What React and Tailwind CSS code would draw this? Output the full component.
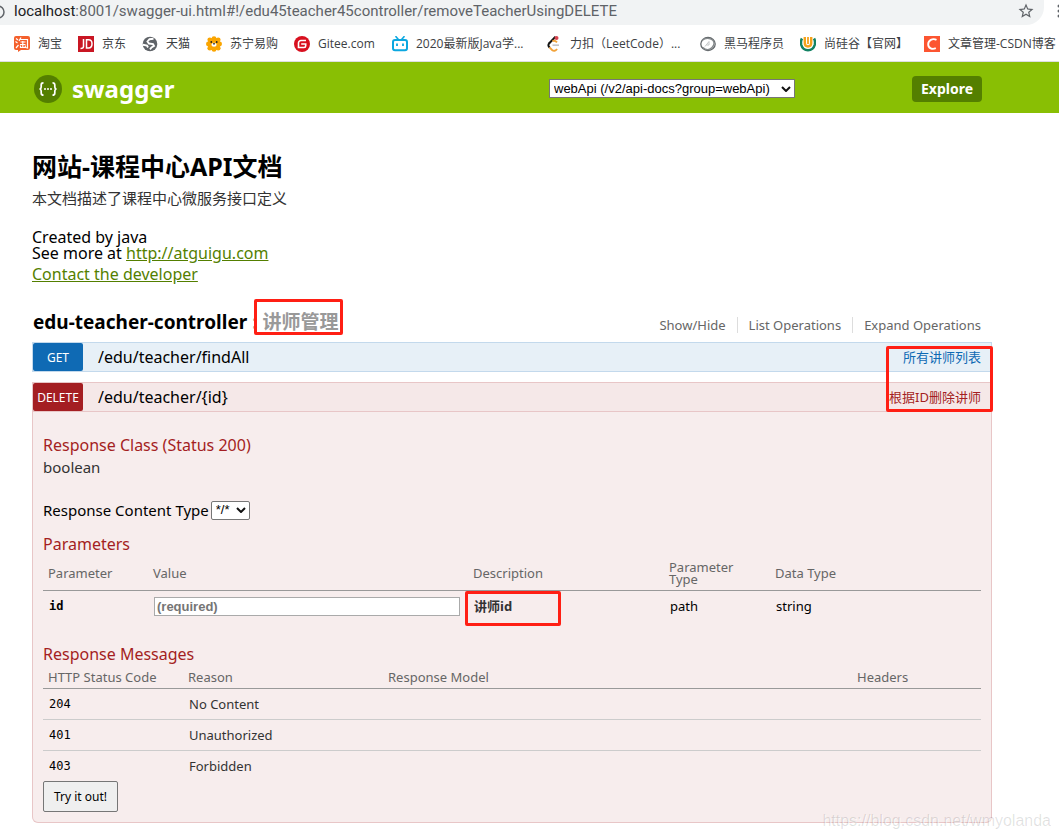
import React from "react";

const bodyFont = "font-['Noto_Sans','Noto_Sans_CJK_SC',sans-serif]";
const uiFont = "font-['Open_Sans','Noto_Sans_CJK_SC',sans-serif]";

function TaobaoIcon() {
  return (
    <svg width="16" height="16" viewBox="0 0 16 16" aria-hidden="true">
      <path d="M2 0h12a2 2 0 0 1 2 2v10a2 2 0 0 1-2 2H7l-3 2v-2H2a2 2 0 0 1-2-2V2a2 2 0 0 1 2-2z" fill="#f4602c" />
      <path d="M2 2.500l2 1.500M1.500 5.500l2 1.500M2 12l2.500-3M7 1.500L5 5M6.500 3.500h7v8.500l-2-.5M6.500 6h5M6 8.500h5.500M8.800 5v6M6.500 9.500v2h4.800v-2" fill="none" stroke="#fff" strokeWidth="1.200" />
    </svg>
  );
}

function JdIcon() {
  return (
    <svg width="16" height="16" viewBox="0 0 16 16" aria-hidden="true">
      <path d="M0 0h16v16H0z" fill="#c91623" />
      <path d="M5.500 3v7.500c0 1.500-1 2-3 2M8.500 3.800h2c2.300 0 3.500 1.700 3.500 4s-1.200 4.200-3.500 4.200h-2z" fill="none" stroke="#fff" strokeWidth="1.500" />
    </svg>
  );
}

function GlobeIcon() {
  return (
    <svg width="16" height="16" viewBox="0 0 16 16" aria-hidden="true">
      <circle cx="8" cy="8" r="7.300" fill="#5f6368" />
      <path d="M11.500 2.800L7.500 3.200 5.500 5.500l1.500 2 4 .6 1 1.900-2.500 1.500-1.500 1.800M.8 8.800l4.200.7 1 2" fill="none" stroke="#fff" strokeWidth="1.900" />
    </svg>
  );
}

function LionIcon() {
  return (
    <svg width="16" height="16" viewBox="0 0 16 16" aria-hidden="true">
      <g fill="#faa500">
        <circle cx="8" cy="8" r="6.300" />
        <circle cx="8" cy="2.600" r="2.400" /><circle cx="8" cy="13.400" r="2.400" />
        <circle cx="2.400" cy="8" r="2.400" /><circle cx="13.600" cy="8" r="2.400" />
        <circle cx="3.800" cy="3.800" r="2.400" /><circle cx="12.200" cy="3.800" r="2.400" />
        <circle cx="3.800" cy="12.200" r="2.400" /><circle cx="12.200" cy="12.200" r="2.400" />
      </g>
      <circle cx="5.300" cy="6" r=".9" fill="#222" /><circle cx="10.700" cy="6" r=".9" fill="#222" />
      <ellipse cx="8" cy="8.800" rx="2.600" ry="2" fill="#fff" />
      <path d="M6.600 7.300h2.800L8 9z" fill="#222" />
    </svg>
  );
}

function GiteeIcon() {
  return (
    <svg width="16" height="16" viewBox="0 0 16 16" aria-hidden="true">
      <circle cx="8" cy="8" r="8" fill="#d8101f" />
      <path d="M12 4.500H7A2.500 2.500 0 0 0 4.500 7v4.500H10A1.800 1.800 0 0 0 11.700 9.700V8H7.200" fill="none" stroke="#fff" strokeWidth="1.600" />
    </svg>
  );
}

function BiliIcon() {
  return (
    <svg width="16" height="16" viewBox="0 0 16 16" aria-hidden="true">
      <path d="M4 .7l2.200 2.500M12 .7L9.800 3.200" stroke="#0ba7e0" strokeWidth="1.600" strokeLinecap="round" />
      <rect x="1" y="4" width="14" height="10.300" rx="2" fill="none" stroke="#0ba7e0" strokeWidth="2" />
      <path d="M5 7.500v2.500M11 7.500v2.500" stroke="#0ba7e0" strokeWidth="1.800" />
    </svg>
  );
}

function LeetIcon() {
  return (
    <svg width="16" height="16" viewBox="0 0 16 16" aria-hidden="true">
      <path d="M9.500 .8L3 7.500" fill="none" stroke="#111" strokeWidth="2" />
      <path d="M3.600 7c-1.800 1.500-1.500 3 0 4.500" fill="none" stroke="#111" strokeWidth="2" />
      <path d="M3.500 11.300l2.600 2.700c1.600 1.400 3.300 1 5-1M6.500 5c2-.8 3.300 0 4.500 1.300" fill="none" stroke="#f2a33a" strokeWidth="1.900" />
      <path d="M6.500 9.200h6.500" stroke="#c5c5c5" strokeWidth="1.700" />
      <circle cx="10.500" cy="2" r="2" fill="#d9434e" />
    </svg>
  );
}

function HorseIcon() {
  return (
    <svg width="16" height="16" viewBox="0 0 16 16" aria-hidden="true">
      <ellipse cx="8" cy="8" rx="7.200" ry="6.500" fill="none" stroke="#63686b" strokeWidth="1.300" />
      <path d="M2 4.500C5 1.500 10 1.800 12.500 4c2 2 1.800 5-.5 7.500M3 11.500c3 3 7 2.500 9 0" fill="none" stroke="#858a8c" strokeWidth="1.300" />
      <path d="M5 10.500l4-5v3.500H6.500" fill="none" stroke="#c3c6c7" />
    </svg>
  );
}

function GuiguIcon() {
  return (
    <svg width="16" height="16" viewBox="0 0 16 16" aria-hidden="true">
      <path d="M2 2.500C.8 4.500.8 7 1.300 9c1 3.600 3.700 5.200 6.700 5.200s5.700-1.600 6.700-5.200c.5-2 .5-4.500-.7-6.500" fill="none" stroke="#128263" strokeWidth="2.500" />
      <path d="M4.800 1v6c0 4.600 6.400 4.600 6.400 0V1" fill="none" stroke="#f5a21b" strokeWidth="2.400" />
      <path d="M8 1v7" stroke="#f5a21b" strokeWidth="1.800" />
    </svg>
  );
}

function CsdnIcon() {
  return (
    <svg width="16" height="16" viewBox="0 0 16 16" aria-hidden="true">
      <path d="M0 0h16v16H0z" fill="#fc5531" />
      <path d="M12.500 3.800C8.500 1.900 4.200 4.300 4.200 8.200c0 4.200 4 5.600 7.600 4" fill="none" stroke="#fff" strokeWidth="1.900" />
    </svg>
  );
}

function SwaggerIcon() {
  return (
    <svg width="28" height="28" viewBox="0 0 28 28" aria-hidden="true">
      <circle cx="14" cy="14" r="14" fill="#547f00" />
      <path d="M9.500 7.800c-2 0-2.300.8-2.300 2.300v1.800c0 1.200-.5 1.900-1.600 2.100 1.100.2 1.600.9 1.600 2.100v1.800c0 1.500.3 2.300 2.300 2.300M18.500 7.800c2 0 2.300.8 2.300 2.300v1.800c0 1.200.5 1.900 1.600 2.100-1.100.2-1.600.9-1.600 2.100v1.800c0 1.500-.3 2.300-2.300 2.300" fill="none" stroke="#fff" strokeWidth="1.700" />
      <g fill="#fff"><circle cx="11" cy="14" r="1" /><circle cx="14" cy="14" r="1" /><circle cx="17" cy="14" r="1" /></g>
    </svg>
  );
}

const bookmarks = [
  [TaobaoIcon, "淘宝", "w-16"],
  [JdIcon, "京东", "w-16"],
  [GlobeIcon, "天猫", "w-16"],
  [LionIcon, "苏宁易购", "w-[88px]"],
  [GiteeIcon, "Gitee.com", "w-[98px]"],
  [BiliIcon, "2020最新版Java学...", "w-[154px]"],
  [LeetIcon, "力扣（LeetCode）...", "w-[154px]"],
  [HorseIcon, "黑马程序员", "w-[100px]"],
  [GuiguIcon, "尚硅谷【官网】", "w-[124px]"],
  [CsdnIcon, "文章管理-CSDN博客", "w-[160px]"],
];

function BrowserBar() {
  return (
    <div className={`${uiFont} overflow-hidden`}>
      <div className="flex h-[25px] items-start overflow-hidden">
        <div className="-ml-10 flex h-[25px] flex-1 items-center rounded-br-[18px] bg-[#f1f3f4] pl-10 pr-[9px]">
          <svg width="14" height="16" viewBox="0 0 14 16" className="shrink-0" aria-hidden="true">
            <circle cx="-2" cy="7" r="6" fill="none" stroke="#5f6368" strokeWidth="1.500" />
          </svg>
          <div className="flex-1 pb-1 font-['Roboto',sans-serif] text-[15px] leading-5 text-[#5f6368]">
            <span className="text-[#202124]">localhost</span>:8001/swagger-ui.html#!/edu45teacher45controller/removeTeacherUsingDELETE
          </div>
          <button type="button" aria-label="Bookmark this page" className="pb-1">
            <svg width="18" height="18" viewBox="0 0 24 24" fill="#5f6368" aria-hidden="true">
              <path d="M22 9.240l-7.190-.62L12 2 9.190 8.630 2 9.240l5.460 4.730L5.820 21 12 17.270 18.180 21l-1.630-7.030L22 9.240zM12 15.400l-3.760 2.270 1-4.280-3.320-2.880 4.380-.38L12 6.100l1.710 4.040 4.380.38-3.320 2.880 1 4.280L12 15.400z" />
            </svg>
          </button>
        </div>
        <div className="w-[15px] shrink-0 overflow-hidden pl-[13px]">
          <svg width="4" height="18" viewBox="0 0 4 18" aria-hidden="true" fill="#5f6368">
            <circle cx="2" cy="6" r="1.500" /><circle cx="2" cy="11" r="1.500" /><circle cx="2" cy="16" r="1.500" />
          </svg>
        </div>
      </div>
      <nav className="flex h-[37px] items-center border-b border-[#dcdfe1] pl-[14px] pt-0.5 text-xs text-[#3c4043]">
        {bookmarks.map(([Icon, label, width]) => (
          <a key={label} href="#" className={`flex shrink-0 items-center gap-2 whitespace-nowrap ${width}`}>
            <Icon />
            <span>{label}</span>
          </a>
        ))}
      </nav>
    </div>
  );
}

function Chevron() {
  return (
    <svg width="10" height="6" viewBox="0 0 10 6" className="pointer-events-none absolute right-1 top-1/2 -translate-y-1/2" aria-hidden="true">
      <path d="M1 1l4 4 4-4" fill="none" stroke="#111" strokeWidth="2" />
    </svg>
  );
}

function Operation({ method, path, summary, blue, children }) {
  const tone = blue
    ? "border-[#c3d9ec] bg-[#e7f0f7]"
    : "border-[#e8c6c7] bg-[#f5e8e8]";
  return (
    <li>
      <div className={`flex h-[30px] items-stretch border ${tone}`}>
        <button type="button" className={`w-[50px] shrink-0 rounded-xs pt-0.5 text-center text-xs text-white ${blue ? "bg-[#0f6ab4]" : "bg-[#a41e22]"}`}>
          {method}
        </button>
        <a href="#" className="flex-1 pl-[15px] text-base leading-7 text-black">{path}</a>
        <a href="#" className={`pr-[10px] text-[13px] leading-7 ${blue ? "text-[#0f6ab4]" : "text-[#a41e22]"}`}>{summary}</a>
      </div>
      {children}
    </li>
  );
}

const statuses = [["204", "No Content"], ["401", "Unauthorized"], ["403", "Forbidden"]];
const mark = "pointer-events-none absolute rounded-xs border-3 border-[#ff1f14]";
const h4 = "text-base leading-5 text-[#a41e22]";

export default function App() {
  return (
    <div className={`${bodyFont} relative overflow-hidden bg-white text-black`}>
      <BrowserBar />
      <header className="flex h-[51px] items-center bg-[#89bf04] pl-[34px] pr-[77px] pt-0.5">
        <a href="#" className="flex flex-1 items-center gap-[10px] text-2xl font-bold text-white">
          <SwaggerIcon />
          <span>swagger</span>
        </a>
        <div className="relative mr-[117px]">
          <select aria-label="API group" className="block h-[19px] w-[246px] appearance-none rounded-none border border-[#767676] bg-white pl-1 font-['Liberation_Sans',sans-serif] text-[13px] leading-4">
            <option>webApi (/v2/api-docs?group=webApi)</option>
          </select>
          <Chevron />
        </div>
        <button type="button" className="h-[26px] w-[70px] rounded-sm bg-[#547f00] text-sm font-bold text-white">Explore</button>
      </header>

      <main className="ml-8 mr-[67px] pb-4 pt-[39px]">
        <h1 className="text-[25px] font-bold leading-7">网站-课程中心API文档</h1>
        <p className="mt-2 text-[15px] leading-5 text-[#333]">本文档描述了课程中心微服务接口定义</p>
        <div className="mt-[21px] text-base leading-4">
          <div>Created by java</div>
          <div>See more at <a href="#" className="text-[#547f00] underline">http://atguigu.com</a></div>
          <a href="#" className="mt-[3px] block w-fit leading-5 text-[#547f00] underline">Contact the developer</a>
        </div>

        <section className="mt-[19px]">
          <div className="flex h-[38px] items-center justify-between pl-px">
            <h2 className="whitespace-nowrap text-[19px] font-bold text-[#999]">
              <a href="#" className="text-black">edu-teacher-controller</a> :{" "}
              <span className="relative">讲师管理
                <span className={`${mark} -left-2 -right-1 -top-2.5 h-9`} />
              </span>
            </h2>
            <ul className="flex items-center pr-[11px] pt-1.5 text-[13px] leading-4 text-[#666]">
              <li className="border-r border-[#ddd] pr-[11px]"><a href="#">Show/Hide</a></li>
              <li className="border-r border-[#ddd] px-[11px]"><a href="#">List Operations</a></li>
              <li className="pl-[11px]"><a href="#">Expand Operations</a></li>
            </ul>
          </div>

          <ul className="relative mt-px space-y-[10px]">
            <Operation blue method="GET" path="/edu/teacher/findAll" summary="所有讲师列表" />
            <Operation method="DELETE" path="/edu/teacher/{id}" summary="根据ID删除讲师">
              <div className="rounded-b-md border border-t-0 border-[#e8c6c7] bg-[#f7eded] px-[10px] pb-[10px] pt-[23px]">
                <h4 className={h4}>Response Class (Status 200)</h4>
                <p className="mt-0.5 text-[15px] leading-5 text-[#333]">boolean</p>
                <div className="mt-[23px] flex items-center gap-0.5 text-[15px] leading-5">
                  <label htmlFor="content-type">Response Content Type</label>
                  <div className="relative">
                    <select id="content-type" className="block h-[19px] w-[39px] appearance-none rounded-xs border border-[#767676] bg-white pl-1 font-['Liberation_Sans',sans-serif] text-[13px] leading-4">
                      <option>*/*</option>
                    </select>
                    <Chevron />
                  </div>
                </div>
                <h4 className={`${h4} mt-[14px]`}>Parameters</h4>
                <table className="w-full table-fixed text-left text-[13px]">
                  <colgroup>
                    <col className="w-[105px]" /><col className="w-[320px]" /><col className="w-[196px]" /><col className="w-[106px]" /><col />
                  </colgroup>
                  <thead>
                    <tr className="h-9 border-b border-[#999] leading-3 text-[#666]">
                      {["Parameter", "Value", "Description", "Parameter Type", "Data Type"].map((t) => (
                        <th key={t} className={`pl-[5px] pt-0.5 font-normal ${t === "Parameter Type" ? "pr-5" : ""}`}>{t}</th>
                      ))}
                    </tr>
                  </thead>
                  <tbody>
                    <tr className="h-8 leading-4">
                      <td className="pl-[6px] font-['DejaVu_Sans_Mono',monospace] text-xs font-bold"><label htmlFor="param-id">id</label></td>
                      <td className="pl-[6px] pr-[8px]">
                        <input id="param-id" placeholder="(required)" className="block h-[19px] w-full border border-[#aaa] bg-white px-0.5 font-['Liberation_Sans',sans-serif] text-[13px] font-bold placeholder:text-[#757575]" />
                      </td>
                      <td className="relative pl-[6px] font-bold text-[#333]">讲师id
                        <span className={`${mark} -left-[3px] top-0 h-[35px] w-24`} />
                      </td>
                      <td className="pl-[6px]">path</td>
                      <td className="pl-[6px]">string</td>
                    </tr>
                  </tbody>
                </table>
                <h4 className={`${h4} mt-[22px]`}>Response Messages</h4>
                <table className="w-full table-fixed text-left text-[13px]">
                  <colgroup>
                    <col className="w-[140px]" /><col className="w-[200px]" /><col /><col className="w-[129px]" />
                  </colgroup>
                  <thead>
                    <tr className="h-6 border-b border-[#999] text-[#666]">
                      {["HTTP Status Code", "Reason", "Response Model", "Headers"].map((t) => (
                        <th key={t} className="pl-[5px] pt-0.5 font-normal leading-4">{t}</th>
                      ))}
                    </tr>
                  </thead>
                  <tbody>
                    {statuses.map(([code, reason]) => (
                      <tr key={code} className="h-[31px] border-b border-[#ccc] last:border-0">
                        <td className="pl-[6px] font-['DejaVu_Sans_Mono',monospace] text-xs">{code}</td>
                        <td className="pl-[6px] pt-0.5 text-[#333]">{reason}</td>
                        <td /><td />
                      </tr>
                    ))}
                  </tbody>
                </table>
                <button type="button" className="h-[31px] w-[75px] rounded-xs border border-[#767676] bg-[#efefef] text-xs">Try it out!</button>
              </div>
            </Operation>
            <li aria-hidden="true" className={`${mark} -right-px top-1 h-[66px] w-[107px]`} />
          </ul>
        </section>
      </main>
      <div className="pointer-events-none absolute bottom-[18px] right-2 -mb-2 pb-2 font-['Liberation_Sans',sans-serif] text-base leading-5 text-black/12 [text-shadow:1px_1px_0_rgba(255,255,255,0.6)]">https://blog.csdn.net/wmyolanda</div>
    </div>
  );
}
